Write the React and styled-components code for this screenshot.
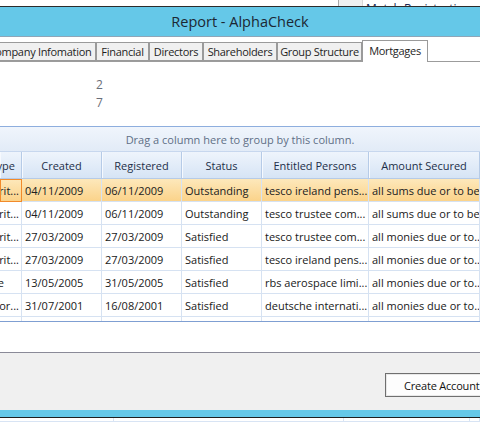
import React from 'react';
import styled, { createGlobalStyle } from 'styled-components';

const GlobalStyle = createGlobalStyle`
  html, body {
    margin: 0;
    padding: 0;
    background: #ffffff;
    overflow: hidden;
  }
  * {
    box-sizing: border-box;
  }
`;

const tabs = [
  { label: 'Company Infomation', w: 112 },
  { label: 'Financial', w: 53 },
  { label: 'Directors', w: 54 },
  { label: 'Shareholders', w: 74 },
  { label: 'Group Structure', w: 85 },
  { label: 'Mortgages', w: 66, active: true },
];

const columns = ['Type', 'Created', 'Registered', 'Status', 'Entitled Persons', 'Amount Secured'];

const rows = [
  { type: 'Legal Charge writ...', created: '04/11/2009', registered: '06/11/2009', status: 'Outstanding', persons: 'tesco ireland pens...', amount: 'all sums due or to be...', selected: true },
  { type: 'Legal Charge writ...', created: '04/11/2009', registered: '06/11/2009', status: 'Outstanding', persons: 'tesco trustee com...', amount: 'all sums due or to be...' },
  { type: 'Charge over writ...', created: '27/03/2009', registered: '27/03/2009', status: 'Satisfied', persons: 'tesco trustee com...', amount: 'all monies due or to...' },
  { type: 'Charge over writ...', created: '27/03/2009', registered: '27/03/2009', status: 'Satisfied', persons: 'tesco ireland pens...', amount: 'all monies due or to...' },
  { type: 'Charge', created: '13/05/2005', registered: '31/05/2005', status: 'Satisfied', persons: 'rbs aerospace limi...', amount: 'all monies due or to...', short: true },
  { type: 'Debenture for...', created: '31/07/2001', registered: '16/08/2001', status: 'Satisfied', persons: 'deutsche internati...', amount: 'all monies due or to...' },
  { type: '', created: '', registered: '', status: '', persons: '', amount: '' },
];

function App() {
  return (
    <>
      <GlobalStyle />
      <Screen>
        <Backdrop>
          <BackdropPane />
          <BackdropGutter />
          <BackdropText>Match Registration</BackdropText>
        </Backdrop>
        <Window>
          <TitleBar>Report - AlphaCheck</TitleBar>
          <TabStrip>
            {tabs.map((t) => (
              <Tab key={t.label} $w={t.w} $active={t.active}>
                {t.label}
              </Tab>
            ))}
          </TabStrip>
          <TabPage>
            <Summary>
              <SummaryValue>2</SummaryValue>
              <SummaryValue>7</SummaryValue>
            </Summary>
            <Grid>
              <GroupPanel>Drag a column here to group by this column.</GroupPanel>
              <HeaderRow>
                {columns.map((c, i) => (
                  <HeaderCell key={c} $first={i === 0}>
                    {c}
                  </HeaderCell>
                ))}
              </HeaderRow>
              <GridBody>
                {rows.map((r, i) => (
                  <Row key={i} $selected={r.selected}>
                    <TypeCell $focused={r.selected} $short={r.short}>
                      {r.type}
                    </TypeCell>
                    <Cell>{r.created}</Cell>
                    <Cell>{r.registered}</Cell>
                    <Cell>{r.status}</Cell>
                    <Cell>{r.persons}</Cell>
                    <Cell>{r.amount}</Cell>
                  </Row>
                ))}
              </GridBody>
            </Grid>
            <GridSpacer />
          </TabPage>
          <ButtonBar>
            <Button>Create Account</Button>
          </ButtonBar>
          <BottomBar />
        </Window>
        <BelowWindow>
          <BelowCell $w={114} />
          <BelowCell $w={230} />
          <BelowCell $w={126} />
          <BelowCell $w={10} />
        </BelowWindow>
      </Screen>
    </>
  );
}

export default App;

const font = `'Segoe UI', 'Open Sans', 'Noto Sans', sans-serif`;

const Screen = styled.div`
  width: 480px;
  height: 425px;
  overflow: hidden;
  display: flex;
  flex-direction: column;
  font-family: ${font};
  font-size: 11px;
  color: #1e1e1e;
`;

const Backdrop = styled.div`
  height: 6px;
  display: flex;
  overflow: hidden;
  background: #ffffff;
`;
const BackdropPane = styled.div`
  width: 339px;
  border-right: 1px solid #a8a8a8;
`;
const BackdropGutter = styled.div`
  width: 24px;
  background: #f0f0f0;
  border-right: 1px solid #d8d8d8;
`;
const BackdropText = styled.div`
  padding-left: 3px;
  margin-top: 3px;
  font-size: 12px;
  line-height: 12px;
  color: #1a2a55;
  white-space: nowrap;
`;

const Window = styled.div`
  border-top: 1px solid #2c2c2c;
  display: flex;
  flex-direction: column;
`;

const TitleBar = styled.div`
  height: 30px;
  background: #65c8e8;
  border-bottom: 1px solid #8fa6b8;
  display: flex;
  align-items: center;
  justify-content: center;
  font-size: 14.5px;
  color: #1c2733;
  padding-bottom: 1px;
`;

const TabStrip = styled.div`
  height: 25px;
  display: flex;
  align-items: flex-end;
  margin-left: -16px;
  background: #ffffff;
  border-bottom: 1px solid #9c9c9c;
`;

const Tab = styled.div`
  width: ${(p) => p.$w}px;
  height: ${(p) => (p.$active ? 22 : 19)}px;
  margin-bottom: ${(p) => (p.$active ? -1 : 0)}px;
  border: 1px solid #9a9a9a;
  border-bottom: ${(p) => (p.$active ? 'none' : '1px solid #9a9a9a')};
  background: ${(p) => (p.$active ? '#ffffff' : '#f0f0f0')};
  display: flex;
  justify-content: center;
  align-items: ${(p) => (p.$active ? 'flex-start' : 'center')};
  padding-top: ${(p) => (p.$active ? 2 : 0)}px;
  font-size: 11px;
  letter-spacing: -0.3px;
  white-space: nowrap;
  color: #1e1e1e;
`;

const TabPage = styled.div`
  background: #ffffff;
  display: flex;
  flex-direction: column;
`;

const Summary = styled.div`
  height: 64px;
  padding: 14px 0 0 96px;
  display: flex;
  flex-direction: column;
`;
const SummaryValue = styled.div`
  font-size: 12px;
  line-height: 18px;
  color: #6a6e78;
`;

const Grid = styled.div`
  border-top: 1px solid #8eaede;
  border-bottom: 1px solid #7f9fd2;
  display: flex;
  flex-direction: column;
`;

const GroupPanel = styled.div`
  height: 24px;
  background: linear-gradient(#f0f5fc, #e2ebf7);
  display: flex;
  align-items: center;
  justify-content: center;
  color: #5f6f86;
  font-size: 11px;
`;

const gridCols = '22px 80px 80px 80px 107px 1fr';

const HeaderRow = styled.div`
  height: 28px;
  display: grid;
  grid-template-columns: ${gridCols};
  background: linear-gradient(#eef4fc, #d6e4f5);
  border-top: 1px solid #c7d7ee;
  border-bottom: 1px solid #b6cbe7;
`;

const HeaderCell = styled.div`
  border-right: 1px solid #b6cbe7;
  box-shadow: inset 1px 0 0 #f6f9fe;
  display: flex;
  align-items: center;
  justify-content: ${(p) => (p.$first ? 'flex-end' : 'center')};
  padding-right: ${(p) => (p.$first ? 6 : 0)}px;
  overflow: hidden;
  white-space: nowrap;
  color: #1d2f48;
  font-size: 11px;
`;

const GridBody = styled.div`
  height: 142px;
  overflow: hidden;
`;

const Row = styled.div`
  height: 23px;
  display: grid;
  grid-template-columns: ${gridCols};
  border-bottom: 1px solid #d6e2f2;
  background: ${(p) => (p.$selected ? 'linear-gradient(#fde8bb, #fbd38a)' : '#ffffff')};
`;

const Cell = styled.div`
  border-right: 1px solid #d6e2f2;
  padding-left: 3px;
  display: flex;
  align-items: center;
  overflow: hidden;
  white-space: nowrap;
  font-size: 11px;
  color: #202020;
`;

const TypeCell = styled(Cell)`
  justify-content: flex-end;
  padding-left: 0;
  padding-right: ${(p) => (p.$short ? 17 : 2)}px;
  border: ${(p) => (p.$focused ? '1px solid #f28a2a' : 'none')};
  border-right: 1px solid ${(p) => (p.$focused ? '#f28a2a' : '#d6e2f2')};
  margin-bottom: ${(p) => (p.$focused ? -1 : 0)}px;
`;

const GridSpacer = styled.div`
  height: 30px;
`;

const ButtonBar = styled.div`
  height: 58px;
  background: #f0f0f0;
  border-top: 1px solid #8a8a98;
  display: flex;
  justify-content: flex-start;
  padding: 20px 0 0 385px;
`;

const Button = styled.div`
  width: 115px;
  height: 24px;
  flex-shrink: 0;
  border: 1px solid #6f6f6f;
  box-shadow: inset 0 0 0 1px #e8e8e8;
  background: #fdfdfd;
  display: flex;
  align-items: center;
  padding-left: 18px;
  font-size: 11px;
  letter-spacing: -0.2px;
  color: #111111;
  white-space: nowrap;
`;

const BottomBar = styled.div`
  height: 8px;
  background: #65c8e8;
  border-bottom: 1px solid #1f1f1f;
`;

const BelowWindow = styled.div`
  flex: 1;
  display: flex;
  background: #ffffff;
  padding-bottom: 2px;
`;

const BelowCell = styled.div`
  width: ${(p) => p.$w}px;
  border-right: 1px solid #d8e4f4;
  border-bottom: 1px solid #d8e4f4;
  height: 4px;
`;
